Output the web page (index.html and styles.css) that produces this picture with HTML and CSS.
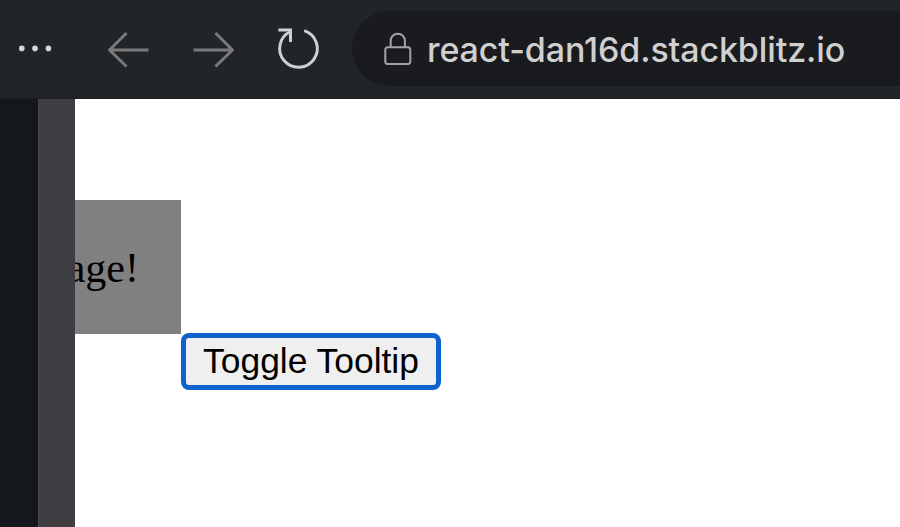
FILE: index.html
```html
<!DOCTYPE html>
<html lang="en">
<head>
<meta charset="utf-8">
<title>react-dan16d.stackblitz.io</title>
<link rel="stylesheet" href="styles.css">
</head>
<body>
<header class="toolbar">
  <svg class="controls" width="352" height="98" viewBox="0 0 352 98" fill="none" aria-hidden="true">
    <g fill="#d6d7d8"><circle cx="21.8" cy="48.4" r="2.8"/><circle cx="35" cy="48.4" r="2.8"/><circle cx="48.4" cy="48.4" r="2.8"/></g>
    <g stroke="#7b7a7b" stroke-width="3" stroke-linejoin="round">
      <path d="M148.5 50H110M126.500 33 109.500 50l17 16.500"/>
      <path d="M193.500 50H232M215.500 33 232.500 50l-17 16.500"/>
    </g>
    <g stroke="#d0d0d1" stroke-width="3">
      <path d="M304.200 30.600A18.800 18.800 0 1 1 290.500 31.500"/>
      <path d="M278.300 30H290.500V42"/>
    </g>
  </svg>
  <div class="address">
    <svg class="lock" width="28" height="34" viewBox="0 0 28 34" fill="none" stroke="#a3a3a5" stroke-width="2" aria-hidden="true">
      <rect x="1.300" y="15.300" width="25" height="16.800" rx="2.500"/>
      <path d="M6.700 15V8.800a7.100 7.100 0 0 1 14.200 0V15"/>
    </svg>
    <span class="url">react-dan16d.stackblitz.io</span>
  </div>
</header>
<div class="workspace">
  <div class="editor"></div>
  <div class="divider"></div>
  <main class="preview">
    <div class="tooltip">age!</div>
    <button class="toggle" type="button">Toggle Tooltip</button>
  </main>
</div>
</body>
</html>
```
FILE: styles.css
```css
* { box-sizing: border-box; }
body { margin: 0; height: 527px; overflow: hidden; background: #fff; }
.toolbar {
  display: flex;
  height: 99px;
  background: #212528;
  border-bottom: 1px solid #1b1c20;
}
.controls { flex: none; }
.address {
  flex: 1;
  display: flex;
  align-items: center;
  height: 75px;
  margin-top: 11px;
  padding-left: 32px;
  border-radius: 38px 0 0 38px;
  background: #1a1b1e;
}
.lock { flex: none; margin-right: 15px; }
.url {
  padding-top: 2px;
  font: 500 34px/40px Inter, sans-serif;
  letter-spacing: -0.1px;
  color: #d0d0d1;
  white-space: nowrap;
}
.workspace { display: flex; height: 428px; }
.editor { width: 38px; background: #14181c; }
.divider {
  width: 37px;
  background: #3e3d41;
  border-left: 1px solid #4a494d;
}
.preview {
  flex: 1;
  display: grid;
  grid-template-columns: 106px 260px;
  grid-template-rows: 134px 57px;
  align-content: start;
  padding-top: 101px;
  overflow: hidden;
}
.tooltip {
  display: flex;
  align-items: center;
  justify-content: flex-end;
  padding: 2px 42px 0 0;
  overflow: hidden;
  background: #808080;
  color: #000;
  font: 42px/48px "Liberation Serif", serif;
}
.toggle {
  grid-area: 2 / 2;
  margin: -1px 0 1px;
  padding: 0 0 1px;
  border: 5px solid #0d62cb;
  border-radius: 8px;
  background: #efefef;
  color: #000;
  font: 35.4px/40px "Liberation Sans", sans-serif;
  white-space: nowrap;
}
```
